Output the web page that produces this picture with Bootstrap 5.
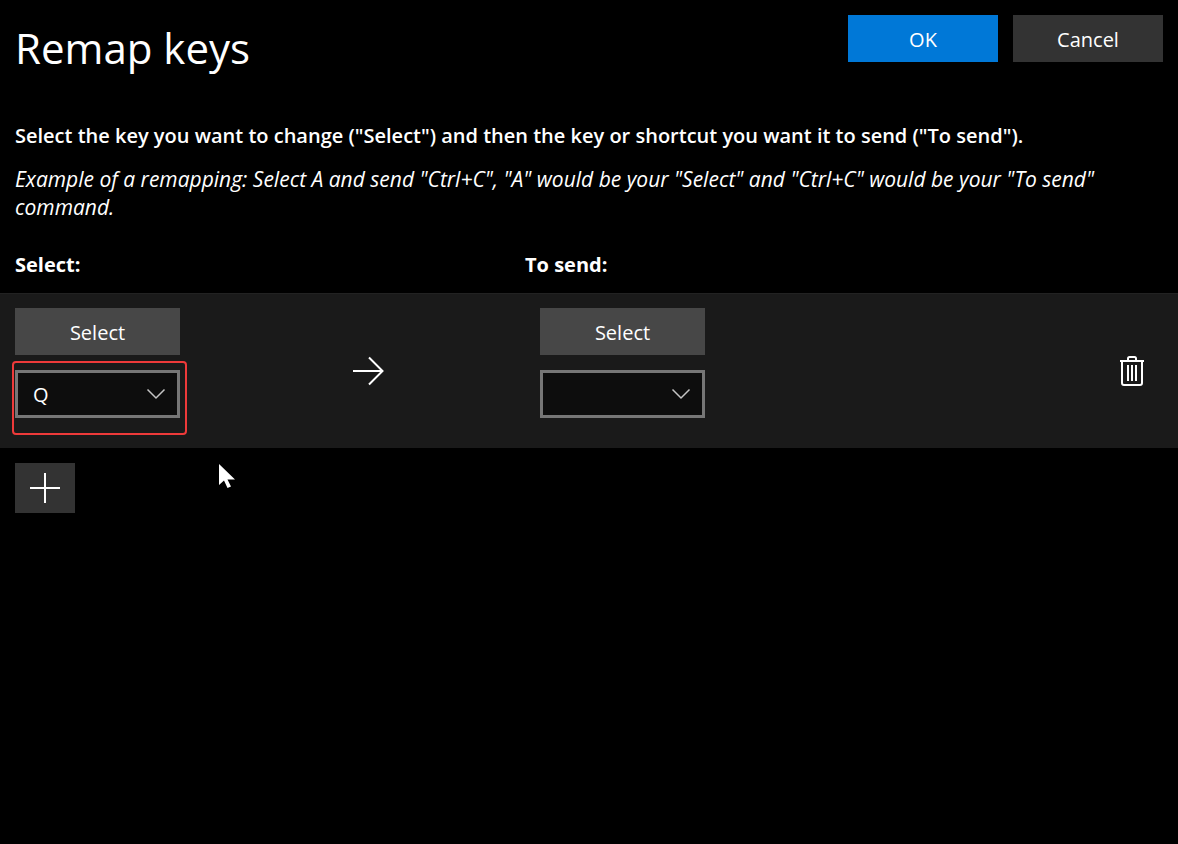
<!DOCTYPE html>
<html lang="en">
<head>
<meta charset="utf-8">
<meta name="viewport" content="width=device-width, initial-scale=1">
<title>Remap keys</title>
<link href="https://cdn.jsdelivr.net/npm/bootstrap@5.3.0/dist/css/bootstrap.min.css" rel="stylesheet">
<style>
  body { background: #000; color: #fff; font-family: "Open Sans", "Noto Sans", sans-serif; font-size: 20px; line-height: 28px; }
  .page-pad { padding: 15px; }
  .side-pad { padding-left: 15px; padding-right: 15px; }
  .page-title { font-size: 42px; line-height: 66px; font-weight: 400; }
  .btn { --bs-btn-color: #fff; --bs-btn-hover-color: #fff; --bs-btn-active-color: #fff; --bs-btn-font-size: 20px; --bs-btn-line-height: 28px; --bs-btn-border-width: 0; --bs-btn-border-radius: 0; --bs-btn-padding-y: 0; --bs-btn-padding-x: 0; height: 47px; }
  .btn-dialog, .btn-key { padding-top: 2px; }
  .btn-dialog { width: 150px; }
  .btn-ok { --bs-btn-bg: #0078d7; --bs-btn-hover-bg: #006cc1; }
  .btn-plain { --bs-btn-bg: #333; --bs-btn-hover-bg: #444; }
  .btn-key { --bs-btn-bg: #474747; --bs-btn-hover-bg: #555; width: 165px; }
  .btn-add { width: 60px; height: 50px; }
  .dialog-actions { gap: 15px; }
  .lead-in { font-size: 20px; font-weight: 600; margin: 26px 0 15px; }
  .example { font-size: 21px; font-style: italic; margin-bottom: 30px; }
  .column-heads { font-weight: 700; margin-bottom: 14px; }
  .from-col { flex: 0 0 510px; }
  .remap-row { background: #1a1a1a; border-top: 1px solid #222; padding-top: 14px; padding-bottom: 15px; }
  .key-stack { gap: 15px; width: 165px; padding-bottom: 15px; }
  .arrow-cell { width: 360px; padding-left: 18px; }
  .key-select { appearance: none; width: 165px; height: 48px; padding: 2px 44px 0 15px; border: 3px solid #767676; background: #0d0d0d; color: #fff; }
  .chevron { right: 14px; top: 16px; pointer-events: none; }
  .highlight { inset: -9px -7px -17px -3px; border: 2px solid #ee3a3a; border-radius: 4px; pointer-events: none; }
  .btn-delete { width: 62px; }
  .pointer { left: 218px; top: 15px; pointer-events: none; }
</style>
</head>
<body>
<header class="page-pad d-flex justify-content-between align-items-start">
  <h1 class="page-title mb-0">Remap keys</h1>
  <div class="dialog-actions d-flex">
    <button type="button" class="btn btn-dialog btn-ok">OK</button>
    <button type="button" class="btn btn-dialog btn-plain">Cancel</button>
  </div>
</header>
<main>
  <section class="side-pad">
    <p class="lead-in">Select the key you want to change ("Select") and then the key or shortcut you want it to send ("To send").</p>
    <p class="example">Example of a remapping: Select A and send "Ctrl+C", "A" would be your "Select" and "Ctrl+C" would be your "To send" command.</p>
    <div class="column-heads d-flex">
      <div class="from-col" id="from-head">Select:</div>
      <div id="to-head">To send:</div>
    </div>
  </section>
  <section class="remap-row side-pad d-flex align-items-center">
    <div class="key-stack d-flex flex-column">
      <button type="button" class="btn btn-key">Select</button>
      <div class="position-relative">
        <select class="key-select rounded-0 d-block" aria-labelledby="from-head"><option selected>Q</option><option>A</option></select>
        <svg class="chevron position-absolute" width="20" height="16" viewBox="0 0 20 16" fill="none" stroke="#c4c4c4" stroke-width="1.5" aria-hidden="true"><path d="M1.5 3.5 10 12l8.500-8.500"/></svg>
        <div class="highlight position-absolute"></div>
      </div>
    </div>
    <div class="arrow-cell d-flex justify-content-center">
      <svg width="32" height="30" viewBox="0 0 32 30" fill="none" stroke="#fff" stroke-width="2" aria-label="sends" role="img"><path d="M0 15h30M16 1.500 29.500 15 16 28.500"/></svg>
    </div>
    <div class="key-stack d-flex flex-column">
      <button type="button" class="btn btn-key">Select</button>
      <div class="position-relative">
        <select class="key-select rounded-0 d-block" aria-labelledby="to-head"><option selected></option><option>A</option></select>
        <svg class="chevron position-absolute" width="20" height="16" viewBox="0 0 20 16" fill="none" stroke="#c4c4c4" stroke-width="1.5" aria-hidden="true"><path d="M1.500 3.500 10 12l8.500-8.500"/></svg>
      </div>
    </div>
    <button type="button" class="btn btn-delete ms-auto d-flex justify-content-center align-items-center" aria-label="Delete remapping">
      <svg width="26" height="32" viewBox="0 0 26 32" fill="none" stroke="#fff" stroke-width="2" aria-hidden="true"><path d="M1 6h24M9 6V3.500Q9 2 10.500 2h5q1.500 0 1.500 1.500V6M3 6v22q0 2 2 2h16q2 0 2-2V6M9 10v16M13 10v16M17 10v16"/></svg>
    </button>
  </section>
  <div class="page-pad position-relative">
    <button type="button" class="btn btn-plain btn-add d-flex justify-content-center align-items-center" aria-label="Add key remapping">
      <svg width="30" height="30" viewBox="0 0 30 30" stroke="#fff" stroke-width="2" aria-hidden="true"><path d="M0 15h30M15 0v30"/></svg>
    </button>
    <svg class="pointer position-absolute" width="18" height="26" viewBox="0 0 18 26" fill="#fff" aria-hidden="true"><path d="M1 1v21l5-4.500 3.500 7.500 3.500-1.500-3.500-7H17z"/></svg>
  </div>
</main>
<script src="https://cdn.jsdelivr.net/npm/bootstrap@5.3.0/dist/js/bootstrap.bundle.min.js"></script>
</body>
</html>
